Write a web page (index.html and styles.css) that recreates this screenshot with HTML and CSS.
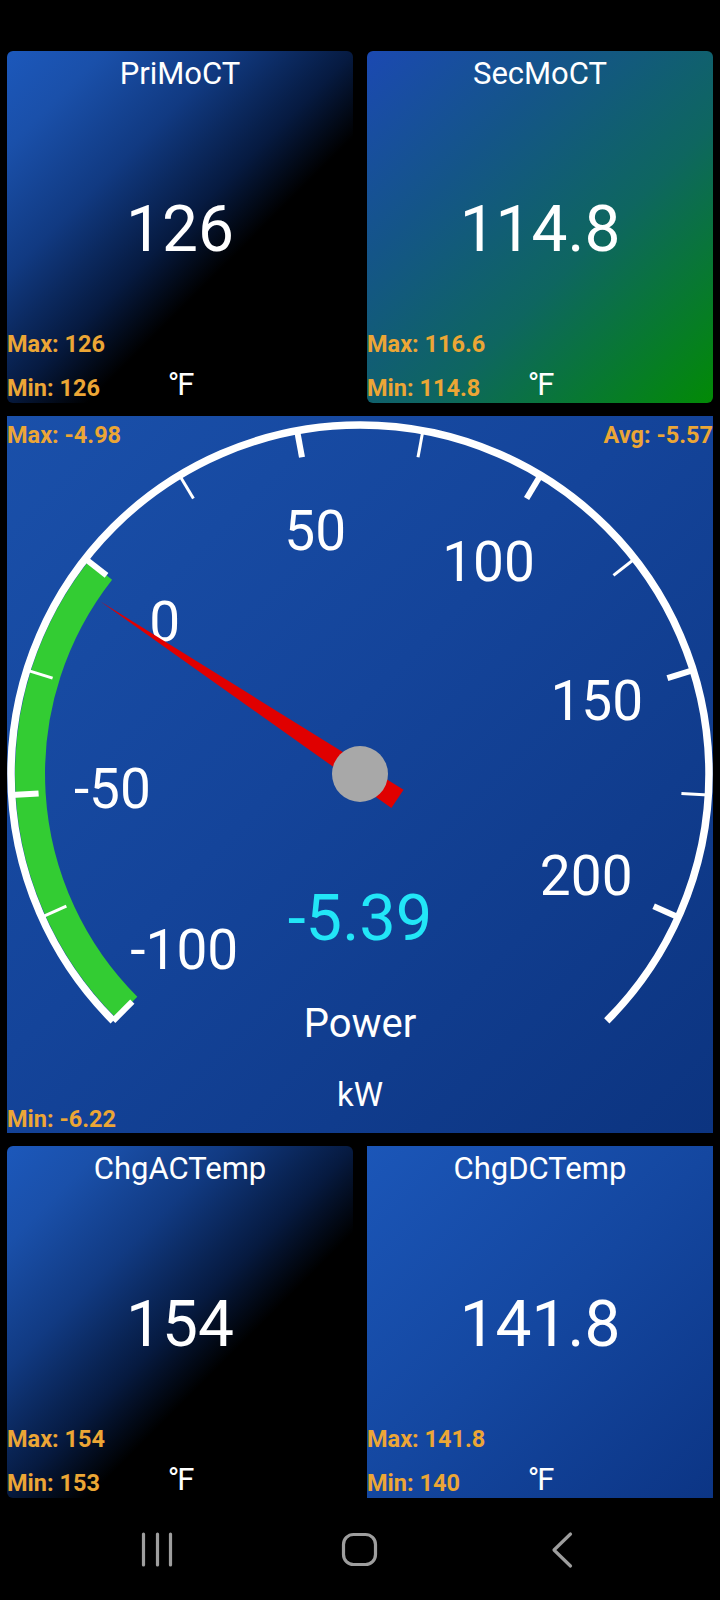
FILE: index.html
```html
<!DOCTYPE html>
<html lang="en">
<head>
    <meta charset="UTF-8">
    <meta name="viewport" content="width=device-width, initial-scale=1.0">
    <title>Dashboard</title>
    <link rel="stylesheet" href="styles.css">
</head>
<body>

<div class="screen">
    <div class="status-bar"></div>

    <main class="dash">
        <section class="tile tile-fade">
            <div class="tile-title">PriMoCT</div>
            <div class="tile-value">126</div>
            <div class="tile-foot">
                <div class="stats">
                    <span class="stat">Max: 126</span>
                    <span class="stat">Min: 126</span>
                </div>
                <div class="unit">°F</div>
            </div>
        </section>

        <section class="tile tile-green">
            <div class="tile-title">SecMoCT</div>
            <div class="tile-value">114.8</div>
            <div class="tile-foot">
                <div class="stats">
                    <span class="stat">Max: 116.6</span>
                    <span class="stat">Min: 114.8</span>
                </div>
                <div class="unit">°F</div>
            </div>
        </section>

        <section class="gauge">
            <svg class="dial" viewBox="0 0 706 717" width="706" height="717">
                <g transform="translate(353 358)">
                    <!-- green band: -100 .. 0 -->
                    <path class="band" d="M -233.3 233.3 A 330 330 0 0 1 -259.7 -203.6"/>
                    <!-- outer ring, 270 degrees -->
                    <path class="ring" d="M -246.8 246.8 A 349 349 0 1 1 246.8 246.8"/>

                    <g class="ticks-major">
                        <line x1="0" y1="-349" x2="0" y2="-322" transform="rotate(-135)"/>
                        <line x1="0" y1="-349" x2="0" y2="-322" transform="rotate(-93.46)"/>
                        <line x1="0" y1="-349" x2="0" y2="-322" transform="rotate(-51.92)"/>
                        <line x1="0" y1="-349" x2="0" y2="-322" transform="rotate(-10.38)"/>
                        <line x1="0" y1="-349" x2="0" y2="-322" transform="rotate(31.15)"/>
                        <line x1="0" y1="-349" x2="0" y2="-322" transform="rotate(72.69)"/>
                        <line x1="0" y1="-349" x2="0" y2="-322" transform="rotate(114.23)"/>
                    </g>
                    <g class="ticks-minor">
                        <line x1="0" y1="-349" x2="0" y2="-322" transform="rotate(-114.23)"/>
                        <line x1="0" y1="-349" x2="0" y2="-322" transform="rotate(-72.69)"/>
                        <line x1="0" y1="-349" x2="0" y2="-322" transform="rotate(-31.15)"/>
                        <line x1="0" y1="-349" x2="0" y2="-322" transform="rotate(10.38)"/>
                        <line x1="0" y1="-349" x2="0" y2="-322" transform="rotate(51.92)"/>
                        <line x1="0" y1="-349" x2="0" y2="-322" transform="rotate(93.46)"/>
                    </g>

                    <g class="scale">
                        <text x="-175.7" y="194.6">-100</text>
                        <text x="-247.6" y="34.2">-50</text>
                        <text x="-195.2" y="-133.5">0</text>
                        <text x="-44.8" y="-224.4">50</text>
                        <text x="128.5" y="-192.6">100</text>
                        <text x="236.8" y="-54.3">150</text>
                        <text x="226.2" y="121.2">200</text>
                    </g>

                    <text class="readout" x="0" y="166">-5.39</text>
                    <text class="readout-name" x="0" y="263">Power</text>
                    <text class="readout-unit" x="0" y="332">kW</text>

                    <polygon class="needle" points="0,-312 11,45 -11,45" transform="rotate(-56.4)"/>
                    <circle class="pivot" cx="0" cy="0" r="28"/>
                </g>
            </svg>
            <div class="gauge-top">
                <span class="stat">Max: -4.98</span>
                <span class="stat">Avg: -5.57</span>
            </div>
            <div class="gauge-bottom">
                <span class="stat">Min: -6.22</span>
            </div>
        </section>

        <section class="tile tile-fade">
            <div class="tile-title">ChgACTemp</div>
            <div class="tile-value">154</div>
            <div class="tile-foot">
                <div class="stats">
                    <span class="stat">Max: 154</span>
                    <span class="stat">Min: 153</span>
                </div>
                <div class="unit">°F</div>
            </div>
        </section>

        <section class="tile tile-blue">
            <div class="tile-title">ChgDCTemp</div>
            <div class="tile-value">141.8</div>
            <div class="tile-foot">
                <div class="stats">
                    <span class="stat">Max: 141.8</span>
                    <span class="stat">Min: 140</span>
                </div>
                <div class="unit">°F</div>
            </div>
        </section>
    </main>

    <nav class="nav-bar">
        <svg class="nav-btn" viewBox="0 0 60 40" width="60" height="40">
            <line x1="15.5" y1="5" x2="15.5" y2="36"/>
            <line x1="29.5" y1="5" x2="29.5" y2="36"/>
            <line x1="42.5" y1="5" x2="42.5" y2="36"/>
        </svg>
        <svg class="nav-btn" viewBox="0 0 60 40" width="60" height="40">
            <rect x="13.5" y="5.5" width="32" height="30" rx="10"/>
        </svg>
        <svg class="nav-btn" viewBox="0 0 60 40" width="60" height="40">
            <polyline points="38.5,5 22,21 38.5,37"/>
        </svg>
    </nav>
</div>

</body>
</html>
```

FILE: styles.css
```css
body {
    margin: 0;
    background-color: #000;
    font-family: Roboto, 'Noto Sans', sans-serif;
    color: #fff;
}
.screen {
    width: 720px;
    height: 1600px;
    display: flex;
    flex-direction: column;
    overflow: hidden;
}
.status-bar {
    height: 51px;
    flex: none;
}
.dash {
    display: grid;
    grid-template-columns: 1fr 1fr;
    grid-template-rows: 352px 717px 352px;
    column-gap: 14px;
    row-gap: 13px;
    padding: 0 7px;
}

/* value tiles */
.tile {
    display: grid;
    grid-template-rows: 1fr auto 1fr;
    border-radius: 6px;
    overflow: hidden;
}
.tile-fade {
    background: linear-gradient(135deg, #1c58bb 0%, #1a50aa 14%, #113a82 32%, #061a40 50%, #000 62%);
}
.tile-green {
    background: linear-gradient(135deg, #1b49b2 0%, #145588 30%, #0e6660 60%, #028a05 100%);
}
.tile-blue {
    background: linear-gradient(135deg, #1b56b8 0%, #1447a0 50%, #0c3585 100%);
    border-radius: 0;
}
.tile-title {
    align-self: start;
    text-align: center;
    font-size: 31px;
    line-height: 36px;
    padding-top: 5px;
}
.tile-value {
    text-align: center;
    font-size: 64px;
    line-height: 70px;
    padding-top: 5px;
}
.tile-foot {
    align-self: end;
    display: grid;
    grid-template-columns: 1fr auto 1fr;
    padding-bottom: 0;
}
.stats {
    display: flex;
    flex-direction: column;
    gap: 14px;
}
.stat {
    color: #eca635;
    font-weight: 700;
    font-size: 23.5px;
    line-height: 30px;
    white-space: nowrap;
}
.unit {
    align-self: end;
    font-size: 31px;
    line-height: 30px;
    margin-bottom: 3px;
    letter-spacing: -2px;
}

/* power gauge */
.gauge {
    grid-column: 1 / 3;
    position: relative;
    display: flex;
    flex-direction: column;
    justify-content: space-between;
    background: linear-gradient(135deg, #1a50aa 0%, #14449a 45%, #0c3480 100%);
}
.dial {
    position: absolute;
    top: 0;
    left: 0;
}
.gauge-top,
.gauge-bottom {
    position: relative;
    display: flex;
    justify-content: space-between;
}
.gauge-top {
    padding-top: 5px;
}
.gauge .stat {
    line-height: 28px;
}
.band {
    fill: none;
    stroke: #33cc33;
    stroke-width: 30;
}
.ring {
    fill: none;
    stroke: #fff;
    stroke-width: 7.5;
}
.ticks-major line {
    stroke: #fff;
    stroke-width: 6;
}
.ticks-minor line {
    stroke: #fff;
    stroke-width: 3;
}
.scale text {
    fill: #fff;
    font-size: 55px;
    text-anchor: middle;
}
.readout {
    fill: #22e6f7;
    font-size: 65px;
    text-anchor: middle;
}
.readout-name {
    fill: #fff;
    font-size: 40px;
    text-anchor: middle;
}
.readout-unit {
    fill: #fff;
    font-size: 33px;
    text-anchor: middle;
}
.needle {
    fill: #e00000;
}
.pivot {
    fill: #a8a8a8;
}

/* system nav */
.nav-bar {
    flex: 1;
    display: flex;
    justify-content: center;
    align-items: center;
    gap: 142px;
}
.nav-btn line,
.nav-btn rect,
.nav-btn polyline {
    fill: none;
    stroke: #9e9e9e;
    stroke-width: 3.2;
    stroke-linecap: round;
    stroke-linejoin: round;
}
```
